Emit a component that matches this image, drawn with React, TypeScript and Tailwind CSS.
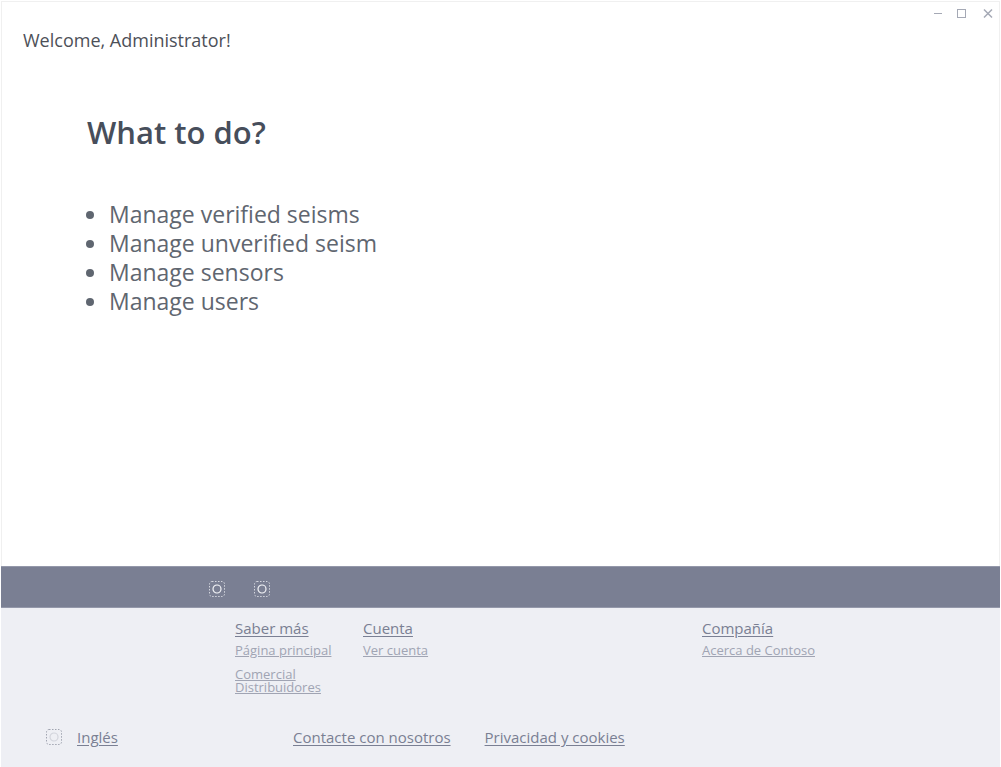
type GlyphProps = { box: string; ring: string };

function PlaceholderGlyph({ box, ring }: GlyphProps) {
  return (
    <svg width="18" height="18" viewBox="0 0 18 18" fill="none" aria-hidden="true">
      <rect x="1.5" y="1.5" width="15" height="15" rx="2.5" stroke={box} strokeWidth="1" strokeDasharray="1.5 1.5" />
      <circle cx="9" cy="9" r="4" stroke={ring} strokeWidth="1.2" />
    </svg>
  );
}

const tasks = [
  "Manage verified seisms",
  "Manage unverified seism",
  "Manage sensors",
  "Manage users",
];

const heading = "text-[15px] leading-5 text-[#7a7f93] underline underline-offset-2";
const link = "text-[13px] text-[#a0a4b3] underline underline-offset-1";

export default function App() {
  return (
    <div className="min-h-screen bg-white p-px pb-0 font-['Open_Sans','Noto_Sans',sans-serif]">
      <div className="flex min-h-[calc(100vh-1px)] flex-col">
        <div className="flex grow flex-col border border-b-0 border-[#f0f0f0]">
          <div className="flex h-6 items-center justify-end gap-3 pr-[5px] text-[#a5a9b5]">
            <button type="button" aria-label="Minimize">
              <svg width="12" height="12" viewBox="0 0 12 12" fill="none" stroke="currentColor">
                <path d="M2 5.5h8" />
              </svg>
            </button>
            <button type="button" aria-label="Maximize">
              <svg width="12" height="12" viewBox="0 0 12 12" fill="none" stroke="currentColor">
                <rect x="1.5" y="1.5" width="8" height="8" />
              </svg>
            </button>
            <button type="button" aria-label="Close" className="pl-[2px]">
              <svg width="12" height="12" viewBox="0 0 12 12" fill="none" stroke="currentColor" strokeWidth="1.5">
                <path d="M2 1.5l8 8M10 1.5l-8 8" />
              </svg>
            </button>
          </div>
          <p className="px-[21px] text-lg text-[#4d5058]">Welcome, Administrator!</p>
          <main className="px-[85px] pt-[58px]">
            <h1 className="text-[31px] leading-10 font-semibold text-[#474e5b]">What to do?</h1>
            <ul className="mt-12 list-disc pl-[22px] text-[23px] leading-[29px] text-[#5f6670]">
              {tasks.map((task) => (
                <li key={task}>{task}</li>
              ))}
            </ul>
          </main>
        </div>
        <div className="flex h-[42px] items-center gap-[27px] border-y border-[#9498aa] bg-[#7a7f93] pt-1 pl-[207px]">
          <a href="#facebook" aria-label="Facebook">
            <PlaceholderGlyph box="#d4d6de" ring="#f4f5f8" />
          </a>
          <a href="#twitter" aria-label="Twitter">
            <PlaceholderGlyph box="#d4d6de" ring="#f4f5f8" />
          </a>
        </div>
        <footer className="bg-[#eeeff4]">
          <div className="grid grid-cols-[128fr_339fr_298fr] pt-[10px] pl-[234px]">
            <section className="flex flex-col items-start">
              <a href="#more" className={heading}>Saber más</a>
              <a href="#home" className={`${link} mt-1 leading-4`}>Página principal</a>
              <a href="#commercial" className={`${link} mt-[10px] leading-[13px]`}>Comercial</a>
              <a href="#distributors" className={`${link} leading-[13px]`}>Distribuidores</a>
            </section>
            <section className="flex flex-col items-start">
              <a href="#account" className={heading}>Cuenta</a>
              <a href="#view-account" className={`${link} mt-1 leading-4`}>Ver cuenta</a>
            </section>
            <section className="flex flex-col items-start">
              <a href="#company" className={heading}>Compañía</a>
              <a href="#about" className={`${link} mt-1 leading-4`}>Acerca de Contoso</a>
            </section>
          </div>
          <div className="flex items-center pt-[33px] pb-5 pl-11">
            <div className="flex w-[248px] items-center gap-[14px]">
              <PlaceholderGlyph box="#a0a4b0" ring="#d3d5dc" />
              <a href="#language" className={heading}>Inglés</a>
            </div>
            <div className="flex gap-[34px]">
              <a href="#contact" className={heading}>Contacte con nosotros</a>
              <a href="#privacy" className={heading}>Privacidad y cookies</a>
            </div>
          </div>
        </footer>
      </div>
    </div>
  );
}
